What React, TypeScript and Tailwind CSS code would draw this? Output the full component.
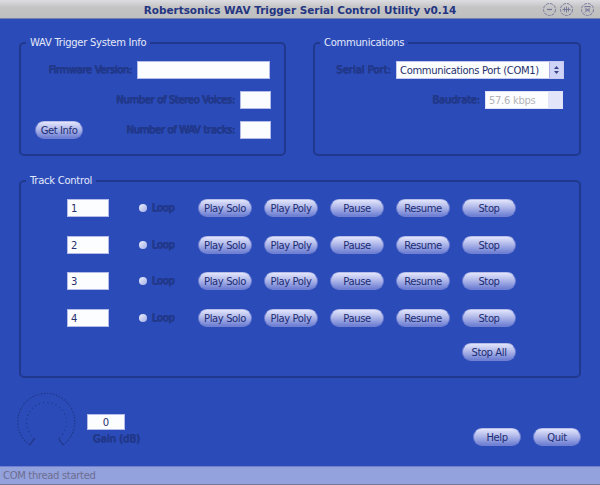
import type { ReactNode } from "react";

function Group({ title, className, children }: { title: string; className: string; children: ReactNode }) {
  return (
    <fieldset className={`min-w-0 rounded-[5px] border-2 border-[#21388f] ${className}`}>
      <legend className="ml-[5px] h-3 px-1 text-[10px] leading-[12px] tracking-[-0.27px] whitespace-nowrap text-[#e4e8fb]">{title}</legend>
      {children}
    </fieldset>
  );
}

function Button({ label, className }: { label: string; className: string }) {
  return (
    <button
      className={`h-[18px] shrink-0 rounded-full border border-[#6f80d3] border-t-[#b5bce9] bg-linear-to-b from-[#e2e5fb] via-[#b0b8e9] via-45% to-[#6d7dd2] text-[10px] leading-[18px] tracking-[-0.4px] whitespace-nowrap text-[#1c2c74] ${className}`}
    >
      {label}
    </button>
  );
}

function Field({ value = "", className }: { value?: string; className: string }) {
  return (
    <div className={`shrink-0 border border-[#b5bbe8] bg-[#fcfdff] text-[10px] text-[#27326c] ${className}`}>{value}</div>
  );
}

function Label({ children, className = "tracking-[-0.35px]" }: { children: ReactNode; className?: string }) {
  return (
    <span
      className={`block text-[10px] leading-[18px] whitespace-nowrap text-[#21388b] [text-shadow:0.5px_0_#21388b,-0.5px_0_#21388b,0_0.5px_#21388b] ${className}`}
    >
      {children}
    </span>
  );
}

function TrackRow({ track }: { track: number }) {
  return (
    <div className="flex h-[18px] items-center">
      <Field value={String(track)} className="h-[18px] w-[42px] pl-[3px] leading-[18px]" />
      <span className="mr-[5px] ml-[30px] h-2 w-2 shrink-0 rounded-full bg-linear-to-br from-[#eceefd] to-[#a4afe6]" />
      <div className="w-[46px]">
        <Label>Loop</Label>
      </div>
      <div className="flex gap-3">
        {["Play Solo", "Play Poly", "Pause", "Resume", "Stop"].map((name) => (
          <Button key={name} label={name} className="w-[54px]" />
        ))}
      </div>
    </div>
  );
}

function WindowIcons() {
  return (
    <svg width="54" height="16" fill="none" stroke="#77799a" strokeWidth="1">
      <g strokeDasharray="3 1">
        <circle cx="7.5" cy="8.5" r="6" />
        <circle cx="24.5" cy="8.5" r="6" />
        <circle cx="45.5" cy="8.5" r="6" />
      </g>
      <path d="M5 8.5h5" strokeWidth="1.3" />
      <path d="M20.5 8.5h8M24.5 5.5v6M22.5 6.5v4M26.5 6.5v4" />
      <path d="M43 6.5l5 5M48 6.5l-5 5M42.5 5.5h6M43 9h5" />
    </svg>
  );
}

export default function App() {
  return (
    <div className="flex h-[485px] w-[600px] flex-col overflow-hidden bg-[#2b4cb8] font-['DejaVu_Sans',Verdana,sans-serif]">
      <header className="flex h-[19px] shrink-0 items-center border-b border-[#7780ad] bg-linear-to-b from-[#dddde2] via-[#c4c4c5] via-40% to-[#bfbfbf]">
        <div className="w-[58px]" />
        <h1 className="flex-1 pt-px text-center text-[10.45px] leading-[18px] font-bold whitespace-nowrap text-[#243582]">
          Robertsonics WAV Trigger Serial Control Utility v0.14
        </h1>
        <div className="w-[58px]">
          <WindowIcons />
        </div>
      </header>

      <main className="flex h-[447px] shrink-0 flex-col pt-[18px] pl-[19px]">
        <div className="flex gap-[27px]">
          <Group title="WAV Trigger System Info" className="h-[119px] w-[267px]">
            <div className="flex flex-col gap-3 pt-3 pr-[13px] pl-[14px]">
              <div className="flex justify-end gap-[5px] pr-px">
                <Label>Firmware Version:</Label>
                <Field className="h-[18px] w-[133px]" />
              </div>
              <div className="flex justify-end gap-[5px]">
                <Label>Number of Stereo Voices:</Label>
                <Field className="h-[18px] w-[31px]" />
              </div>
              <div className="flex gap-[5px]">
                <Button label="Get Info" className="mr-auto w-12" />
                <Label>Number of WAV tracks:</Label>
                <Field className="h-[18px] w-[31px]" />
              </div>
            </div>
          </Group>
          <Group title="Communications" className="h-[119px] w-[268px]">
            <div className="flex flex-col gap-3 pt-3 pr-[15px]">
              <div className="flex justify-end gap-[5px]">
                <Label className="tracking-normal">Serial Port:</Label>
                <div className="flex h-[18px] w-[168px] border border-[#c5c9f0] bg-[#fcfdff] text-[10px] leading-[17px] tracking-[-0.35px] text-[#27326c]">
                  <span className="flex-1 pl-[3px] whitespace-nowrap">Communications Port (COM1)</span>
                  <span className="flex w-[14px] items-center justify-center border-l border-[#aab1e2] bg-[#cfd4f6]">
                    <svg width="7" height="10" fill="#3b458a">
                      <path d="M3.5 1L6 4H1zM3.5 9L1 6h5z" />
                    </svg>
                  </span>
                </div>
              </div>
              <div className="flex justify-end gap-[5px] pr-px">
                <Label className="tracking-[-0.2px]">Baudrate:</Label>
                <div className="flex h-[18px] w-[78px] border border-[#dfe2f8] bg-[#fcfdff] text-[10px] leading-[17px] tracking-[-0.3px] text-[#b4b4b8]">
                  <span className="flex-1 pl-[3px]">57.6 kbps</span>
                  <span className="w-[14px] bg-[#e2e5fa]" />
                </div>
              </div>
            </div>
          </Group>
        </div>

        <Group title="Track Control" className="mt-[19px] h-[203px] w-[562px]">
          <div className="flex flex-col gap-[18.67px] pt-3 pl-[46px]">
            {[1, 2, 3, 4].map((n) => (
              <TrackRow key={n} track={n} />
            ))}
          </div>
          <Button label="Stop All" className="mt-4 ml-[441px] block w-[54px]" />
        </Group>

        <div className="flex pt-[14px]">
          <svg width="60" height="58" className="-ml-[3px] shrink-0" viewBox="0 0 60 58" fill="none" stroke="#21388b">
            <path d="M13.5 53A28.5 28.5 0 1 1 47 53" strokeWidth="1.2" strokeDasharray="1.5 1.5" />
            <path d="M18.5 46.5A20 20 0 1 1 42.5 46.5" strokeWidth="1.2" strokeDasharray="1.2 3" />
            <path d="M13.5 53L18.5 46.5M47 53L42.5 46.5" strokeWidth="1.3" />
          </svg>
          <div className="ml-[11px] flex w-[60px] flex-col pt-[22px]">
            <Field value="0" className="h-4 w-[38px] text-center leading-[15px]" />
            <div className="pl-[6px]">
              <Label className="tracking-normal">Gain (dB)</Label>
            </div>
          </div>
          <div className="ml-auto flex gap-3 pt-[36px] pr-[19px]">
            <Button label="Help" className="w-12" />
            <Button label="Quit" className="w-12" />
          </div>
        </div>
      </main>

      <footer className="h-[19px] shrink-0 border-t border-b border-t-[#6f80cf] border-b-[#747796] bg-[#93a1dc] pl-[3px] text-[10px] leading-[18px] tracking-[-0.33px] text-[#6d6e91]">
        COM thread started
      </footer>
    </div>
  );
}
